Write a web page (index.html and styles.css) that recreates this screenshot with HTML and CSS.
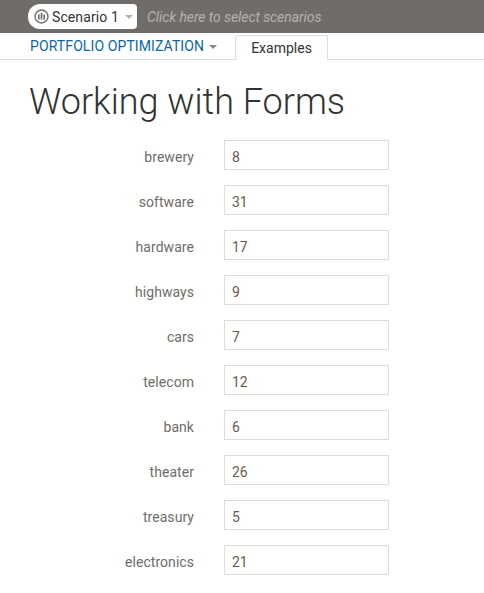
FILE: index.html
```html
<!DOCTYPE html>
<html lang="en">

<head>
    <meta charset="UTF-8">
    <title>Working with Forms</title>
    <link rel="stylesheet" href="styles.css">
</head>

<body>
    <div class="topbar">
        <div class="scenario">
            <svg class="scenario-icon" width="15" height="15" viewBox="0 0 15 15">
                <circle cx="7.5" cy="7.5" r="6.5" fill="none" stroke="#6f6c6a" stroke-width="1.4"/>
                <path d="M4.8 5.5v5M7.5 3.8v6.7M10.2 5.5v5" fill="none" stroke="#6f6c6a" stroke-width="1.7"/>
            </svg>
            <span>Scenario 1</span>
            <span class="caret caret-light"></span>
        </div>
        <div class="hint">Click here to select scenarios</div>
    </div>
    <div class="nav">
        <div class="nav-title">PORTFOLIO OPTIMIZATION <span class="caret"></span></div>
        <div class="tab">Examples</div>
    </div>
    <div class="content">
        <h1>Working with Forms</h1>
        <form class="form">
            <div class="row"><label>brewery</label><input type="text" value="8"></div>
            <div class="row"><label>software</label><input type="text" value="31"></div>
            <div class="row"><label>hardware</label><input type="text" value="17"></div>
            <div class="row"><label>highways</label><input type="text" value="9"></div>
            <div class="row"><label>cars</label><input type="text" value="7"></div>
            <div class="row"><label>telecom</label><input type="text" value="12"></div>
            <div class="row"><label>bank</label><input type="text" value="6"></div>
            <div class="row"><label>theater</label><input type="text" value="26"></div>
            <div class="row"><label>treasury</label><input type="text" value="5"></div>
            <div class="row"><label>electronics</label><input type="text" value="21"></div>
        </form>
    </div>
</body>

</html>
```

FILE: styles.css
```css
* {
    box-sizing: border-box;
    margin: 0;
    padding: 0;
}

body {
    font-family: Roboto, "Liberation Sans", sans-serif;
    background: #fff;
    color: #6f6c6a;
    overflow: hidden;
}

.topbar {
    height: 33px;
    background: #6f6c6a;
    display: flex;
    align-items: center;
    padding-left: 28px;
}

.scenario {
    width: 109px;
    height: 25px;
    background: #fff;
    border-radius: 12px 4px 4px 12px;
    display: flex;
    align-items: center;
    padding-left: 6px;
    font-size: 14px;
    letter-spacing: 0.1px;
    color: #333;
}

.scenario-icon {
    margin-right: 3px;
}

.caret {
    display: inline-block;
    border-left: 4px solid transparent;
    border-right: 4px solid transparent;
    border-top: 4px solid #8a8886;
    vertical-align: middle;
    margin-left: 1px;
}

.caret-light {
    border-top-color: #b5b3b1;
    margin-left: 6px;
}

.hint {
    margin-left: 10px;
    font-size: 14px;
    letter-spacing: -0.08px;
    font-style: italic;
    color: #b5b3b1;
}

.nav {
    height: 27px;
    border-bottom: 1px solid #ddd;
    display: flex;
    align-items: flex-end;
    padding-left: 30px;
}

.nav-title {
    font-size: 14px;
    letter-spacing: 0.1px;
    color: #0b67a5;
    height: 26px;
    line-height: 27px;
    width: 205px;
}

.tab {
    width: 93px;
    height: 25px;
    margin-bottom: -1px;
    background: #fff;
    border: 1px solid #ddd;
    border-bottom: none;
    border-radius: 3px 3px 0 0;
    text-align: center;
    font-size: 14px;
    line-height: 24px;
    color: #333;
}

.content {
    padding: 0 30px;
}

h1 {
    font-size: 36px;
    font-weight: 300;
    color: #333;
    line-height: 45px;
    margin-top: 20px;
    margin-bottom: 15px;
    margin-left: -1px;
}

.form {
    display: flex;
    flex-direction: column;
    gap: 15px;
}

.row {
    display: flex;
    align-items: center;
    height: 30px;
}

label {
    width: 164px;
    text-align: right;
    font-size: 14px;
    letter-spacing: 0.05px;
    padding-top: 4px;
    margin-right: 30px;
    color: #6f6c6a;
}

input[type="text"] {
    width: 165px;
    height: 30px;
    border: 1px solid #ddd;
    padding: 3px 7px 0;
    font-family: inherit;
    font-size: 14px;
    color: #6f5a48;
    background: #fff;
}
```
